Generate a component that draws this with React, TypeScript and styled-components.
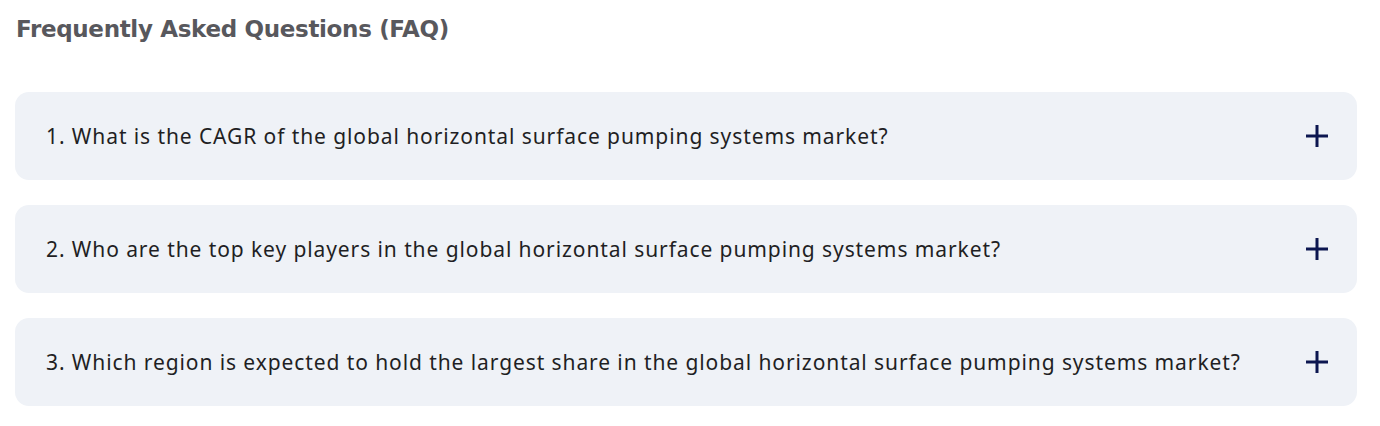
import styled, { createGlobalStyle } from "styled-components";

const GlobalStyle = createGlobalStyle`
  body {
    margin: 0;
    background: #ffffff;
  }
`;

const questions = [
  "What is the CAGR of the global horizontal surface pumping systems market?",
  "Who are the top key players in the global horizontal surface pumping systems market?",
  "Which region is expected to hold the largest share in the global horizontal surface pumping systems market?",
];

function PlusIcon() {
  return (
    <svg width="22" height="22" viewBox="0 0 22 22">
      <path d="M11 0v22M0 11h22" stroke="#0c1650" strokeWidth="3" />
    </svg>
  );
}

export default function App() {
  return (
    <Wrapper>
      <GlobalStyle />
      <Title>Frequently Asked Questions (FAQ)</Title>
      <List>
        {questions.map((q, i) => (
          <Item key={i}>
            <Question>
              {i + 1}. {q}
            </Question>
            <Toggle aria-label="expand">
              <PlusIcon />
            </Toggle>
          </Item>
        ))}
      </List>
    </Wrapper>
  );
}

const Wrapper = styled.div`
  padding: 14px 23px 20px 15px;
`;

const Title = styled.h2`
  margin: 0 0 48px 1px;
  font-family: "DejaVu Sans", "Liberation Sans", sans-serif;
  font-weight: 700;
  font-size: 23px;
  letter-spacing: -0.33px;
  line-height: 30px;
  color: #58585d;
`;

const List = styled.div`
  display: flex;
  flex-direction: column;
  gap: 25px;
`;

const Item = styled.div`
  display: flex;
  align-items: center;
  justify-content: space-between;
  height: 88px;
  padding: 0 29px 0 31px;
  box-sizing: border-box;
  background: #eff2f7;
  border-radius: 14px;
`;

const Question = styled.span`
  font-family: "Noto Sans", "DejaVu Sans", sans-serif;
  font-size: 21px;
  letter-spacing: 0.91px;
  color: #1f1f24;
`;

const Toggle = styled.button`
  display: flex;
  border: none;
  background: none;
  padding: 0;
  cursor: pointer;
`;
